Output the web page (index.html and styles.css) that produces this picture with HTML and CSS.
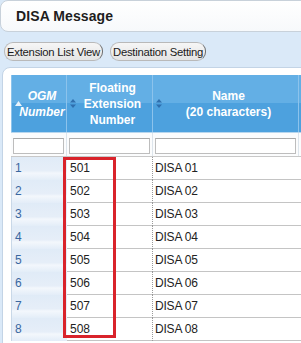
FILE: index.html
```html
<!DOCTYPE html>
<html>
<head>
<meta charset="utf-8">
<link rel="stylesheet" href="styles.css">
</head>
<body>
<div class="titlebar"><h1 class="title">DISA Message</h1></div>
<div class="toolbar">
  <button class="btn">Extension List View</button>
  <button class="btn">Destination Setting</button>
</div>
<div class="panel">
  <div class="grid">
    <div class="row head">
      <div class="hcell first"><span class="sort up"><svg width="7" height="5" viewBox="0 0 7 5"><path d="M0 5 L3.5 0 L7 5Z" fill="#e8f3fc"/></svg></span><span class="htext italic">OGM<br>Number</span></div>
      <div class="hcell"><span class="sort"><svg width="6" height="9" viewBox="0 0 6 9"><path d="M0 3.5 L3 0 L6 3.5Z M0 5.5 L3 9 L6 5.5Z" fill="#2f6fae"/></svg></span><span class="htext">Floating<br>Extension<br>Number</span></div>
      <div class="hcell"><span class="sort"><svg width="6" height="9" viewBox="0 0 6 9"><path d="M0 3.5 L3 0 L6 3.5Z M0 5.5 L3 9 L6 5.5Z" fill="#2f6fae"/></svg></span><span class="htext">Name<br>(20 characters)</span></div>
    </div>
    <div class="row filter">
      <div class="fcell"><input class="finput" type="text"></div>
      <div class="fcell"><input class="finput" type="text"></div>
      <div class="fcell"><input class="finput" type="text"></div>
    </div>
    <div class="row data"><div class="c1">1</div><div class="c2">501</div><div class="c3">DISA 01</div></div>
    <div class="row data"><div class="c1">2</div><div class="c2">502</div><div class="c3">DISA 02</div></div>
    <div class="row data"><div class="c1">3</div><div class="c2">503</div><div class="c3">DISA 03</div></div>
    <div class="row data"><div class="c1">4</div><div class="c2">504</div><div class="c3">DISA 04</div></div>
    <div class="row data"><div class="c1">5</div><div class="c2">505</div><div class="c3">DISA 05</div></div>
    <div class="row data"><div class="c1">6</div><div class="c2">506</div><div class="c3">DISA 06</div></div>
    <div class="row data"><div class="c1">7</div><div class="c2">507</div><div class="c3">DISA 07</div></div>
    <div class="row data"><div class="c1">8</div><div class="c2">508</div><div class="c3">DISA 08</div></div>
  </div>
</div>
<div class="highlight"></div>
</body>
</html>
```
FILE: styles.css
```css
html, body {
  margin: 0;
  padding: 0;
  overflow: hidden;
}
body {
  background: #dae9f8;
  font-family: "Liberation Sans", Arial, sans-serif;
  width: 301px;
  height: 343px;
  position: relative;
}
.titlebar {
  height: 30px;
  margin-right: -12px;
  background: linear-gradient(#ffffff, #f7f9fb);
  border: 1px solid #c8d1da;
  border-radius: 8px;
  display: flex;
  align-items: center;
  padding-left: 15px;
}
.title {
  margin: 0;
  font-size: 14px;
  font-weight: bold;
  color: #1e1e1e;
  letter-spacing: 0.1px;
}
.toolbar {
  display: flex;
  gap: 7px;
  padding: 10px 0 0 4px;
  height: 18px;
}
.btn {
  height: 19px;
  padding: 0 2px 0 2px;
  font-family: "Liberation Sans", Arial, sans-serif;
  font-size: 11.3px;
  letter-spacing: -0.25px;
  color: #1a1a1a;
  background: linear-gradient(#f6f6f6, #e4e4e4);
  border: 1px solid #b9b9b9;
  border-right: 1.5px solid #6e6e6e;
  border-radius: 9px;
  line-height: 16px;
}
.panel {
  margin: 7px -12px 0 2px;
  background: #ffffff;
  border: 1px solid #c3d4e6;
  border-radius: 8px;
  padding: 7px 0 0 8px;
  height: 300px;
}
.row {
  display: grid;
  grid-template-columns: 56px 86px 146px;
}
.head {
  height: 57px;
  background: linear-gradient(#63afe5 0, #63afe5 49%, #4da1de 49%, #4da1de 100%);
  border-bottom: 1px solid #b7d6ee;
}
.hcell {
  position: relative;
  border-right: 1px solid #8cc3ec;
  display: flex;
  align-items: center;
  justify-content: center;
  color: #ffffff;
  font-weight: bold;
  font-size: 12px;
  line-height: 16px;
  text-align: center;
}
.hcell.first {
  border-left: 1px solid #8cc3ec;
}
.htext {
  display: block;
  padding-left: 6px;
}
.italic {
  font-style: italic;
  padding-left: 6px;
}
.sort {
  position: absolute;
  left: 3px;
  top: 24px;
  display: flex;
}
.sort.up {
  top: 26px;
}
.filter {
  height: 23px;
  background: #fbfcfd;
  border-bottom: 1px solid #c8c8c8;
}
.fcell {
  padding: 3px 2px 0 2px;
  border-right: 1px solid #dde5ec;
}
.finput {
  box-sizing: border-box;
  width: 100%;
  height: 16px;
  margin: 0;
  border: 1px solid #bdbdbd;
  border-top-color: #a9a9a9;
  background: #ffffff;
  padding: 0;
}
.data {
  height: 22px;
  border-bottom: 1px solid #c4c4c4;
  font-size: 12px;
  line-height: 23px;
}
.c1 {
  color: #3a67a0;
  padding-left: 3px;
  background: linear-gradient(#e0ebf7 0, #e6eef8 60%, #f3f7fc 70%, #e3edf8 100%);
  border-left: 1px solid #c9d8e8;
}
.c2 {
  color: #222222;
  padding-left: 3px;
  border-right: 1px dotted #9a9a9a;
}
.c3 {
  color: #222222;
  padding-left: 2px;
  letter-spacing: -0.2px;
}
.highlight {
  position: absolute;
  left: 63px;
  top: 157px;
  width: 47px;
  height: 175px;
  border: 3px solid #d9232b;
}
```
